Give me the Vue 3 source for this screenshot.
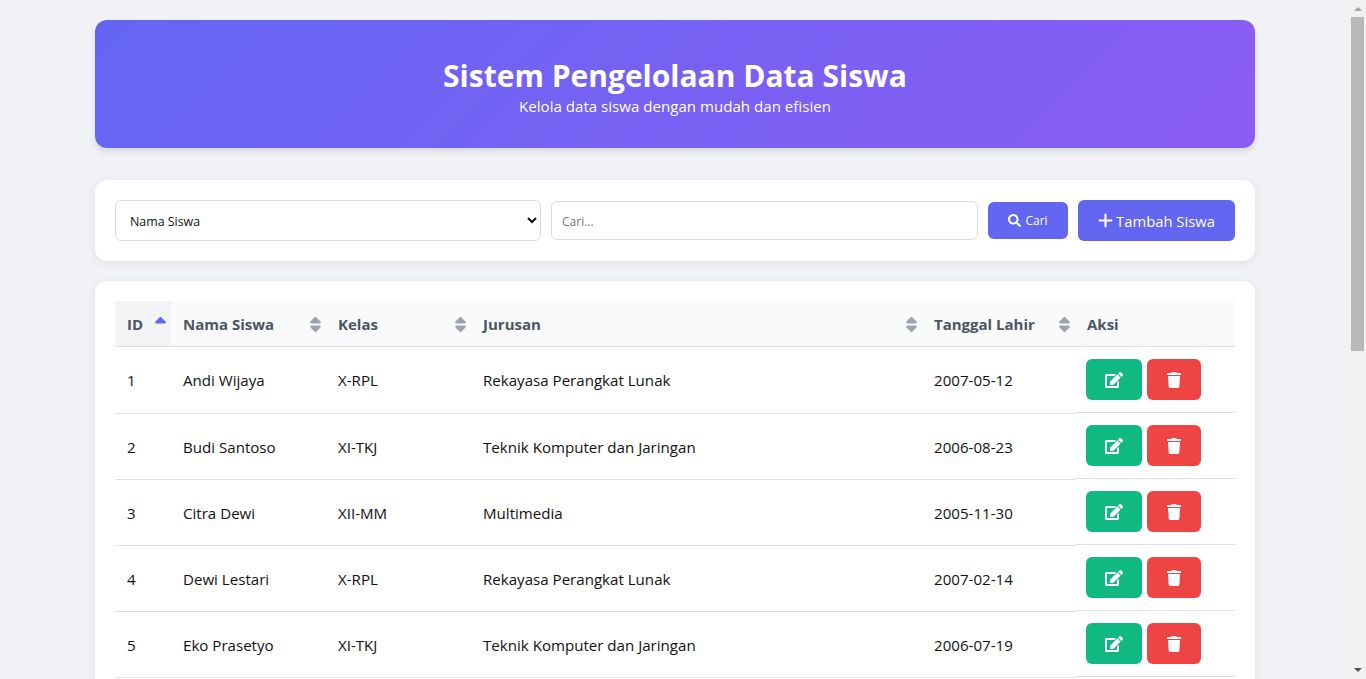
<template>
  <div class="shell">
    <div class="page">
      <header class="hero">
        <h1>Sistem Pengelolaan Data Siswa</h1>
        <p>Kelola data siswa dengan mudah dan efisien</p>
      </header>

      <section class="card toolbar">
        <select class="filter">
          <option v-for="f in filters" :key="f">{{ f }}</option>
        </select>
        <input class="search" type="text" placeholder="Cari..." />
        <button class="btn btn-search">
          <svg class="ico-search" viewBox="0 0 512 512"><path :d="icons.search" /></svg>
          Cari
        </button>
        <button class="btn btn-add">
          <svg class="ico-plus" viewBox="0 0 448 512"><path :d="icons.plus" /></svg>
          Tambah Siswa
        </button>
      </section>

      <section class="card table-card">
        <table>
          <colgroup>
            <col v-for="w in colWidths" :key="w" :style="{ width: w + 'px' }" />
          </colgroup>
          <thead>
            <tr>
              <th v-for="(c, i) in columns" :key="c" :class="{ sorted: i === 0 }">
                {{ c }}
                <svg v-if="i < 5" class="sort" viewBox="0 0 320 512">
                  <path class="up" :d="icons.sortUp" />
                  <path v-if="i > 0" class="down" :d="icons.sortDown" />
                </svg>
              </th>
            </tr>
          </thead>
          <tbody>
            <tr v-for="s in siswa" :key="s.id">
              <td>{{ s.id }}</td>
              <td>{{ s.nama }}</td>
              <td>{{ s.kelas }}</td>
              <td>{{ s.jurusan }}</td>
              <td>{{ s.lahir }}</td>
              <td class="aksi">
                <button class="act act-edit">
                  <svg class="ico-edit" viewBox="0 0 576 512"><path :d="icons.edit" /></svg>
                </button>
                <button class="act act-del">
                  <svg class="ico-trash" viewBox="0 0 448 512"><path :d="icons.trash" /></svg>
                </button>
              </td>
            </tr>
          </tbody>
        </table>
      </section>
    </div>

    <!-- scrollbar bawaan tidak tampil saat headless, jadi digambar sendiri -->
    <div class="scrollbar" aria-hidden="true">
      <i class="arrow arrow-up"></i>
      <i class="thumb"></i>
      <i class="arrow arrow-down"></i>
    </div>
  </div>
</template>

<script setup>
const filters = ['Nama Siswa', 'Kelas', 'Jurusan']
const columns = ['ID', 'Nama Siswa', 'Kelas', 'Jurusan', 'Tanggal Lahir', 'Aksi']
const colWidths = [56, 155, 145, 451, 153, 160]

const RPL = 'Rekayasa Perangkat Lunak'
const TKJ = 'Teknik Komputer dan Jaringan'

const siswa = [
  { id: 1, nama: 'Andi Wijaya', kelas: 'X-RPL', jurusan: RPL, lahir: '2007-05-12' },
  { id: 2, nama: 'Budi Santoso', kelas: 'XI-TKJ', jurusan: TKJ, lahir: '2006-08-23' },
  { id: 3, nama: 'Citra Dewi', kelas: 'XII-MM', jurusan: 'Multimedia', lahir: '2005-11-30' },
  { id: 4, nama: 'Dewi Lestari', kelas: 'X-RPL', jurusan: RPL, lahir: '2007-02-14' },
  { id: 5, nama: 'Eko Prasetyo', kelas: 'XI-TKJ', jurusan: TKJ, lahir: '2006-07-19' },
  { id: 6, nama: 'Fajar Nugroho', kelas: 'XII-MM', jurusan: 'Multimedia', lahir: '2005-09-03' },
  { id: 7, nama: 'Gita Permata', kelas: 'X-RPL', jurusan: RPL, lahir: '2007-01-25' },
  { id: 8, nama: 'Hadi Saputra', kelas: 'XI-TKJ', jurusan: TKJ, lahir: '2006-04-11' },
  { id: 9, nama: 'Indah Sari', kelas: 'XII-MM', jurusan: 'Multimedia', lahir: '2005-12-08' },
  { id: 10, nama: 'Joko Susilo', kelas: 'X-RPL', jurusan: RPL, lahir: '2007-06-17' },
  { id: 11, nama: 'Kartika Putri', kelas: 'XI-TKJ', jurusan: TKJ, lahir: '2006-03-29' },
  { id: 12, nama: 'Lina Marlina', kelas: 'XII-MM', jurusan: 'Multimedia', lahir: '2005-10-21' },
  { id: 13, nama: 'Made Wirawan', kelas: 'X-RPL', jurusan: RPL, lahir: '2007-08-05' },
  { id: 14, nama: 'Nina Anggraini', kelas: 'XI-TKJ', jurusan: TKJ, lahir: '2006-02-16' }
]

const icons = {
  search: 'M505 442.7L405.3 343c-4.5-4.5-10.6-7-17-7H372c27.6-35.3 44-79.7 44-128C416 93.1 322.9 0 208 0S0 93.1 0 208s93.1 208 208 208c48.3 0 92.7-16.4 128-44v16.3c0 6.4 2.5 12.5 7 17l99.7 99.7c9.4 9.4 24.6 9.4 33.9 0l28.3-28.3c9.4-9.4 9.4-24.6.1-34zM208 336c-70.7 0-128-57.2-128-128 0-70.7 57.2-128 128-128 70.7 0 128 57.2 128 128 0 70.7-57.2 128-128 128z',
  plus: 'M256 80c0-17.7-14.3-32-32-32s-32 14.3-32 32V224H48c-17.7 0-32 14.3-32 32s14.3 32 32 32H192V432c0 17.7 14.3 32 32 32s32-14.3 32-32V288H400c17.7 0 32-14.3 32-32s-14.3-32-32-32H256V80z',
  edit: 'M402.6 83.2l90.2 90.2c3.8 3.8 3.8 10 0 13.8L274.4 405.6l-92.8 10.3c-12.4 1.4-22.9-9.1-21.5-21.5l10.3-92.8L388.8 83.2c3.8-3.8 10-3.8 13.8 0zm162-22.9l-48.8-48.8c-15.2-15.2-39.9-15.2-55.2 0l-35.4 35.4c-3.8 3.8-3.8 10 0 13.8l90.2 90.2c3.8 3.8 10 3.8 13.8 0l35.4-35.4c15.2-15.3 15.2-40 0-55.2zM384 346.2V448H64V128h229.8c3.2 0 6.2-1.3 8.5-3.5l40-40c7.6-7.6 2.2-20.5-8.5-20.5H48C21.5 64 0 85.5 0 112v352c0 26.5 21.5 48 48 48h352c26.5 0 48-21.5 48-48V306.2c0-10.7-12.9-16-20.5-8.5l-40 40c-2.2 2.3-3.5 5.3-3.5 8.5z',
  trash: 'M432 32H312l-9.4-18.7A24 24 0 0 0 281.1 0H166.8a23.72 23.72 0 0 0-21.4 13.3L136 32H16A16 16 0 0 0 0 48v32a16 16 0 0 0 16 16h416a16 16 0 0 0 16-16V48a16 16 0 0 0-16-16zM53.2 467a48 48 0 0 0 47.9 45h245.8a48 48 0 0 0 47.9-45L416 128H32z',
  sortUp: 'M137.4 41.4c12.5-12.5 32.8-12.5 45.3 0l128 128c9.2 9.2 11.9 22.9 6.9 34.9s-16.6 19.8-29.6 19.8H32c-12.9 0-24.6-7.8-29.6-19.8s-2.7-25.7 6.9-34.9l128-128z',
  sortDown: 'M137.4 470.6l-128-128c-9.2-9.2-11.9-22.9-6.9-34.9s16.6-19.8 29.6-19.8H288c12.9 0 24.6 7.8 29.6 19.8s2.7 25.7-6.9 34.9l-128 128c-12.5 12.5-32.8 12.5-45.3 0z'
}
</script>

<style>
body {
  background: #f0f2f5;
}
</style>

<style scoped>
.shell {
  padding-right: 16px;
}
.page {
  width: 1160px;
  margin: 0 auto;
  padding: 20px 0;
  font-family: "Open Sans", "Noto Sans", sans-serif;
  color: #111827;
}
.hero {
  background: linear-gradient(135deg, #6366f1, #8b5cf6);
  border-radius: 12px;
  padding: 36px 32px 0;
  height: 128px;
  box-sizing: border-box;
  margin-bottom: 32px;
  text-align: center;
  color: #fff;
  box-shadow: 0 4px 6px rgba(0, 0, 0, 0.1);
}
.hero h1 {
  margin: 0;
  font-size: 30px;
  line-height: 40px;
  font-weight: 700;
}
.hero p {
  margin: -2px 0 0;
  font-size: 15.1px;
  line-height: 24px;
}
.card {
  background: #fff;
  border-radius: 12px;
  box-shadow: 0 2px 8px rgba(0, 0, 0, 0.08);
  padding: 20px;
  margin-bottom: 20px;
}
.card:last-child {
  margin-bottom: 0;
}
.toolbar {
  display: flex;
  align-items: center;
  gap: 10px;
}
.filter,
.search {
  min-width: 0;
  box-sizing: border-box;
  border: 1px solid #d9dbe0;
  border-radius: 6px;
  background: #fff;
  font-family: inherit;
  color: #111;
}
.filter {
  flex: 0 0 426px;
  height: 41px;
  padding: 1px 10px 0;
  font-size: 12.4px;
}
.search {
  flex: 1 1 0;
  height: 39px;
  padding: 1px 10px 0;
  font-size: 12px;
}
.search::placeholder {
  color: #757575;
}
.btn {
  border: 0;
  border-radius: 6px;
  background: #6366f1;
  color: #fff;
  font-family: inherit;
  display: flex;
  align-items: center;
  justify-content: center;
  box-sizing: border-box;
}
.btn svg,
.act svg {
  fill: #fff;
  display: block;
}
.btn-search {
  width: 80px;
  height: 37px;
  gap: 4px;
  font-size: 12px;
}
.ico-search {
  width: 13px;
  height: 13px;
}
.btn-add {
  width: 157px;
  height: 41px;
  gap: 3px;
  font-size: 14.8px;
}
.ico-plus {
  width: 15px;
  height: 17px;
}
table {
  width: 1120px;
  table-layout: fixed;
  border-collapse: separate;
  border-spacing: 0;
}
th {
  height: 46px;
  padding: 1px 12px 0;
  box-sizing: border-box;
  background: #f9fafb;
  color: #4b5563;
  font-size: 15px;
  font-weight: 700;
  text-align: left;
  border-bottom: 1px solid #dddfe3;
  position: relative;
}
th.sorted {
  background: #f3f4f6;
}
td {
  height: 66px;
  padding: 0 12px;
  box-sizing: border-box;
  font-size: 15.1px;
  color: #111;
  border-bottom: 1px solid #dddfe3;
}
tbody tr:first-child td {
  height: 67px;
}
.sort {
  position: absolute;
  right: 5px;
  top: 15px;
  width: 11px;
  height: 17px;
  fill: #9ca3af;
}
.sorted .up {
  fill: #6366f1;
}
/* garis sel aksi 1px lebih tinggi dari sel lain */
.aksi {
  position: relative;
  vertical-align: top;
  padding: 11px 0 0 11px;
  font-size: 0;
  border-bottom: 0;
}
tbody tr:first-child .aksi {
  padding-top: 12px;
}
.aksi::after {
  content: "";
  position: absolute;
  left: 0;
  right: 0;
  bottom: 1px;
  border-bottom: 1px solid #dddfe3;
}
.act {
  border: 0;
  padding: 0;
  height: 41px;
  border-radius: 6px;
  display: inline-flex;
  align-items: center;
  justify-content: center;
  vertical-align: top;
}
.ico-edit {
  width: 18px;
  height: 16px;
}
.ico-trash {
  width: 14px;
  height: 16px;
}
.act-edit {
  width: 56px;
  background: #10b981;
  margin-right: 5px;
}
.act-del {
  width: 54px;
  background: #ef4444;
}
.scrollbar {
  position: fixed;
  top: 0;
  right: 0;
  bottom: 0;
  width: 16px;
  background: #f1f1f1;
}
.thumb {
  position: absolute;
  left: 1px;
  right: 2px;
  top: 17px;
  height: 334px;
  background: #b8b8b8;
}
.arrow {
  position: absolute;
  left: 4px;
  width: 0;
  height: 0;
  border-left: 4px solid transparent;
  border-right: 4px solid transparent;
}
.arrow-up {
  top: 7px;
  border-bottom: 4px solid #a3a3a3;
}
.arrow-down {
  bottom: 7px;
  border-top: 4px solid #505050;
}
</style>
